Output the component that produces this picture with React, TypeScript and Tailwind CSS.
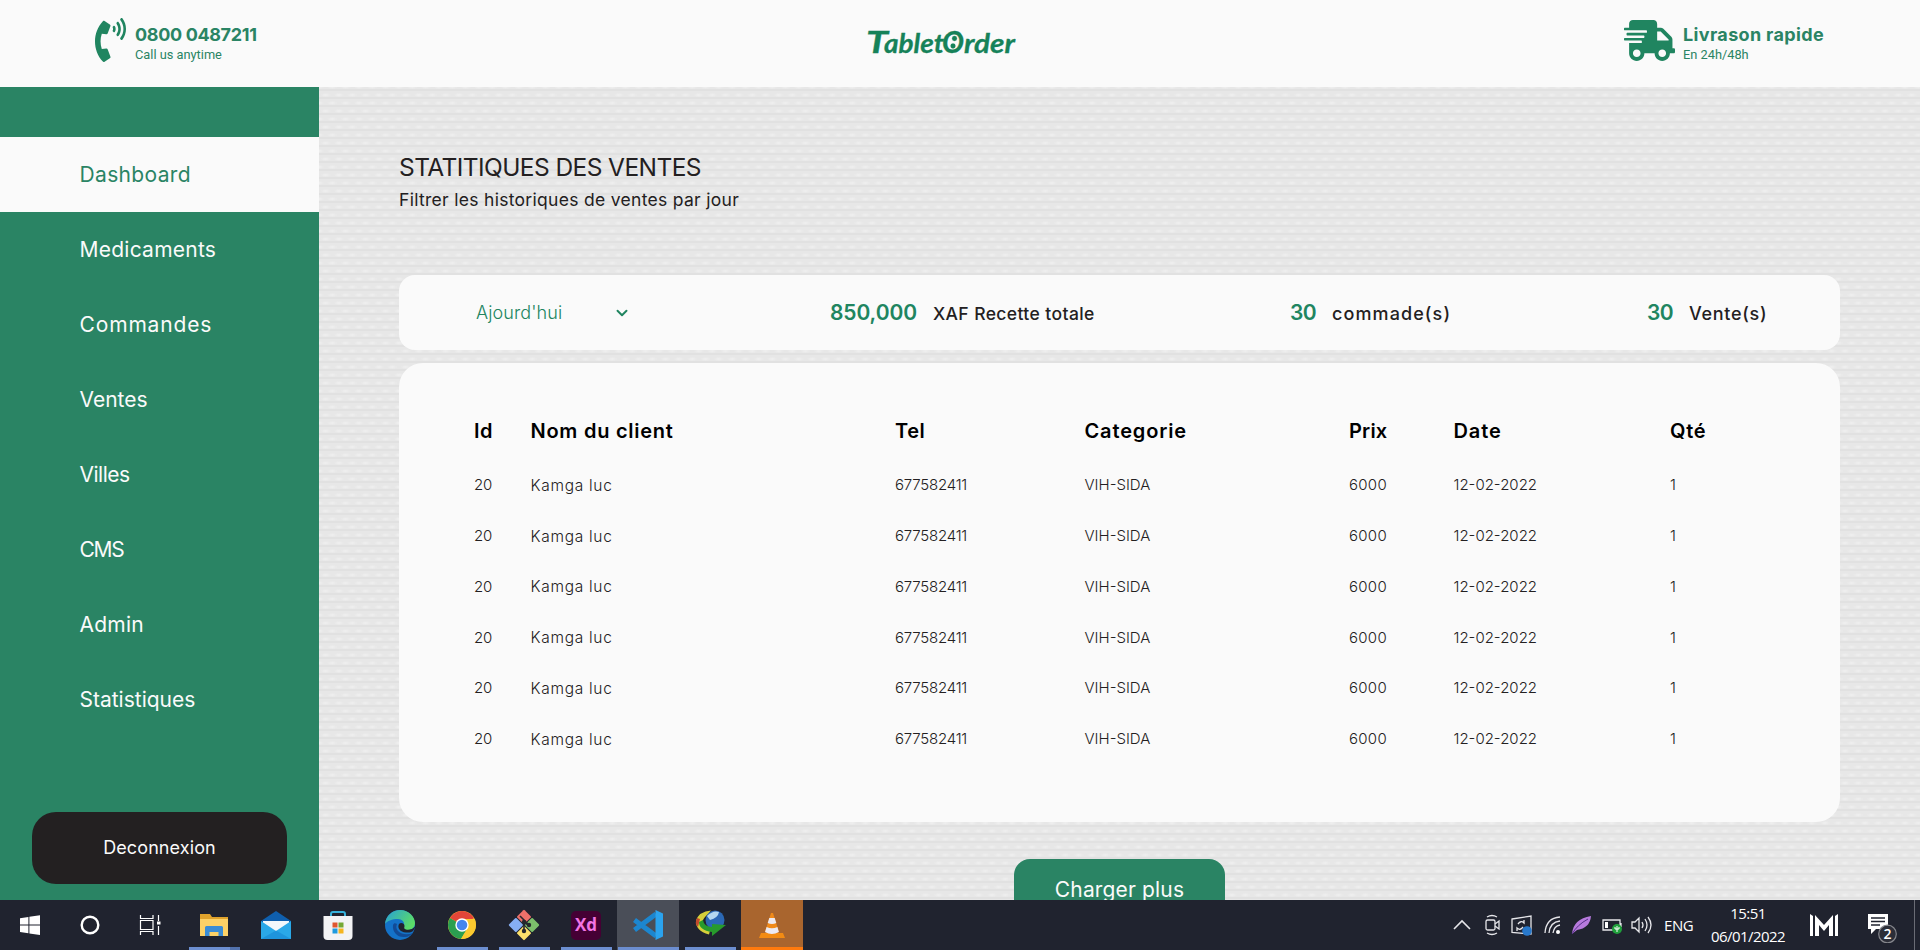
import type { ReactNode } from "react";
import { FaPhoneVolume, FaShippingFast } from "react-icons/fa";
import { ChevronDown } from "lucide-react";

const nav = [
  { label: "Dashboard", cls: "bg-[#fafafa] text-[#2a8464] tracking-[0.35px]" },
  { label: "Medicaments", cls: "text-[#fafafa] tracking-[0.25px]" },
  { label: "Commandes", cls: "text-[#fafafa] tracking-[0.85px]" },
  { label: "Ventes", cls: "text-[#fafafa] tracking-[0px]" },
  { label: "Villes", cls: "text-[#fafafa] tracking-[-0.5px]" },
  { label: "CMS", cls: "text-[#fafafa] tracking-[-1.3px]" },
  { label: "Admin", cls: "text-[#fafafa] tracking-[0.25px]" },
  { label: "Statistiques", cls: "text-[#fafafa] tracking-[0px]" },
];

const columns = [
  { label: "Id", cls: "tracking-[0.5px]" },
  { label: "Nom du client", cls: "tracking-[0.75px]" },
  { label: "Tel", cls: "tracking-[0.5px]" },
  { label: "Categorie", cls: "tracking-[0.85px]" },
  { label: "Prix", cls: "tracking-[0.2px]" },
  { label: "Date", cls: "tracking-[0.9px]" },
  { label: "Qté", cls: "tracking-[0.7px]" },
];

const sale = [
  { value: "20", cls: "tracking-[-0.2px]" },
  { value: "Kamga luc", cls: "text-[15.5px] tracking-[0.7px]" },
  { value: "677582411", cls: "tracking-[-0.22px]" },
  { value: "VIH-SIDA", cls: "" },
  { value: "6000", cls: "tracking-[0.29px]" },
  { value: "12-02-2022", cls: "" },
  { value: "1", cls: "" },
];

const tableGrid = "grid grid-cols-[56.5px_364.5px_189.5px_264.5px_104.5px_216.5px_1fr]";

function Logo() {
  return (
    <svg width="150" height="44" viewBox="0 0 150 44" fill="#168259" stroke="#168259" strokeWidth=".3" aria-label="TabletOrder">
      <g fontFamily="Lato, sans-serif" fontStyle="italic" fontWeight="700" fontSize="27">
        <text x="0" y="33" fontSize="31" textLength="22" lengthAdjust="spacingAndGlyphs">T</text>
        <text x="18" y="33" textLength="60" lengthAdjust="spacingAndGlyphs">ablet</text>
        <text x="76" y="33" fontSize="31" textLength="22" lengthAdjust="spacingAndGlyphs">O</text>
        <text x="98" y="33" textLength="51" lengthAdjust="spacingAndGlyphs">rder</text>
      </g>
      <circle cx="88.5" cy="18.5" r="2.4" />
      <circle cx="87" cy="26" r="2.4" />
    </svg>
  );
}

function Header() {
  return (
    <header className="flex h-[87px] shrink-0 items-start bg-[#fafafa] text-[#2a8464]">
      <div className="flex w-[866px] pt-[18px] pl-[95px]">
        <FaPhoneVolume className="h-11 w-[31px] text-[#208560]" preserveAspectRatio="none" />
        <div className="pt-[6px] pl-[9px]">
          <div className="text-[18px] leading-[21px] font-bold tracking-[-0.35px] whitespace-nowrap">0800 0487211</div>
          <div className="pt-px font-['Roboto',sans-serif] text-[12.8px] leading-[18px]">Call us anytime</div>
        </div>
      </div>
      <div className="pt-[20px]">
        <Logo />
      </div>
      <div className="ml-auto flex w-[296px] pt-[20px]">
        <FaShippingFast className="h-[41px] w-[51px] text-[#208560]" />
        <div className="pt-[4px] pl-[8px]">
          <div className="text-[18px] leading-[21px] font-bold tracking-[0.35px] whitespace-nowrap">Livrason rapide</div>
          <div className="pt-px font-['Roboto',sans-serif] text-[12.8px] leading-[18px]">En 24h/48h</div>
        </div>
      </div>
    </header>
  );
}

function Sidebar() {
  return (
    <aside className="flex w-[319px] shrink-0 flex-col bg-[#2a8464] pt-[50px]">
      <nav>
        {nav.map((item) => (
          <a key={item.label} className={`flex h-[75px] items-center pl-[79.5px] text-[21px] ${item.cls}`}>
            {item.label}
          </a>
        ))}
      </nav>
      <button className="mt-auto mb-4 ml-8 h-[72px] w-[255px] rounded-3xl bg-[#232021] pb-px text-[18px] tracking-[0.1px] text-[#fafafa]">
        Deconnexion
      </button>
    </aside>
  );
}

function Stat({ value, label, className, valueClass, labelClass }: {
  value: string; label: string; className: string; valueClass: string; labelClass: string;
}) {
  return (
    <div className={`flex items-baseline gap-4 whitespace-nowrap ${className}`}>
      <span className={`text-[21px] font-semibold text-[#208560] ${valueClass}`}>{value}</span>
      <span className={`font-medium text-[#232021] ${labelClass}`}>{label}</span>
    </div>
  );
}

function Main() {
  return (
    <main className="flex flex-1 flex-col overflow-hidden bg-[#e5e5e5] bg-[radial-gradient(ellipse_5px_2px_at_center,#f0f0f0_0,#f0f0f000_100%),radial-gradient(ellipse_5px_2px_at_center,#f0f0f0_0,#f0f0f000_100%),linear-gradient(#e7e7e7_0_6px,#e1e1e1_6px_8px)] bg-[size:13.33px_16px,13.33px_16px,13.33px_8px] bg-[position:0_0,6.66px_8px,0_4px] pr-20 pl-20">
      <h1 className="mt-[65px] text-[24.5px] leading-[30px] tracking-[-0.58px] text-[#232021]">STATITIQUES DES VENTES</h1>
      <p className="mt-[6px] text-[17.5px] leading-6 tracking-[0.3px] text-[#232021]">
        Filtrer les historiques de ventes par jour
      </p>
      <section className="mt-[63px] flex h-[75px] shrink-0 items-center rounded-2xl bg-[#fafafa]">
        <div className="ml-[77px] flex w-[354px] items-center text-[#208560]">
          <span className="w-[137px] text-[18px] font-light tracking-[0.1px]">Ajourd'hui</span>
          <ChevronDown className="size-[18px]" strokeWidth={2.6} />
        </div>
        <Stat value="850,000" label="XAF Recette totale" className="w-[460px]" valueClass="tracking-[-0.1px]" labelClass="text-[17.5px] tracking-[0.4px]" />
        <Stat value="30" label="commade(s)" className="w-[357px]" valueClass="tracking-[-0.6px]" labelClass="text-[18px] tracking-[1.1px]" />
        <Stat value="30" label="Vente(s)" className="" valueClass="tracking-[-0.6px]" labelClass="text-[18px] tracking-[0.7px]" />
      </section>
      <section className="mt-[13px] h-[459px] shrink-0 rounded-3xl bg-[#fafafa] pt-[52px] pl-[75px]">
        <div className={`${tableGrid} h-[45px] text-[20px] leading-[32px] font-semibold text-black`}>
          {columns.map((c) => (
            <span key={c.label} className={c.cls}>{c.label}</span>
          ))}
        </div>
        {Array.from({ length: 6 }, (_, i) => (
          <div key={i} className={`${tableGrid} h-[50.8px] items-center text-[15px] font-light text-[#232021]`}>
            {sale.map((c) => (
              <span key={c.value} className={c.cls}>{c.value}</span>
            ))}
          </div>
        ))}
      </section>
      <button className="mt-[37px] h-[61px] w-[211px] shrink-0 self-center rounded-2xl bg-[#2a8464] text-[21px] tracking-[0.15px] text-[#fafafa]">
        Charger plus
      </button>
    </main>
  );
}

function Task({ children, className = "", bar = "" }: { children: ReactNode; className?: string; bar?: string }) {
  return (
    <div className={`flex h-full w-[62px] flex-col items-center ${className}`}>
      <svg width="34" height="34" viewBox="0 0 34 34" className="mt-2 mb-[5px] shrink-0">{children}</svg>
      <div className={`h-[3px] ${bar}`} />
    </div>
  );
}

function Taskbar() {
  return (
    <footer className="flex h-[50px] shrink-0 justify-between bg-[#20232f] font-['Open_Sans',sans-serif] text-white">
      <div className="flex">
        <Task className="w-[60px]!">
          <path fill="#fff" d="M7 10.2l8.4-1.2v7.6H7zM16.4 8.8L27 7.3v9.3H16.4zM7 17.6h8.4v7.6L7 24zM16.4 17.6H27v9.5l-10.6-1.5z" />
        </Task>
        <Task className="w-[60px]!">
          <circle cx="17" cy="17" r="8.3" fill="none" stroke="#fff" strokeWidth="2.4" />
        </Task>
        <Task className="mr-[3.5px] w-[60px]!">
          <g stroke="#fff" strokeWidth="1.2" fill="none">
            <path d="M7.500 7v3.500h12.500V7M7.500 27v-3.500h12.500V27M7.500 12.500h12.500v9H7.500zM25.500 7v6M25.500 18v9" />
          </g>
          <rect x="24" y="13.500" width="3.500" height="3" fill="#fff" />
        </Task>
        <Task className="w-[61.5px]!" bar="w-[51px] bg-[linear-gradient(90deg,#6c8ed0_0_41px,#5272ad_41px)]">
          <path fill="#dfa22c" d="M3 6h10l2 3h16v19H3z" />
          <path fill="#fdd166" d="M3 11h28v17H3z" />
          <path fill="#3b8cd4" d="M8 28V19.500q0-1.500 1.500-1.500h15q1.500 0 1.500 1.500V28h-4.500v-4h-9v4z" />
        </Task>
        <Task>
          <path fill="#0f5fae" d="M2 13L17 3l15 10v4H2z" />
          <path fill="#f2f7fb" d="M4 13h26v10H4z" />
          <path fill="#2aa8e8" d="M2 13l15 10 15-10v18H2z" />
          <path fill="#1787d3" d="M2 31l15-8.500L32 31z" opacity=".6" />
        </Task>
        <Task>
          <path d="M10 9V6q0-2 2-2h10q2 0 2 2v3" fill="none" stroke="#36b2dc" strokeWidth="2" />
          <path fill="#f3f3f5" d="M2.500 8h29v20q0 4-4 4h-21q-4 0-4-4z" />
          <path fill="#e0572f" d="M11.500 14.500h5v5h-5z" />
          <path fill="#74a835" d="M17.500 14.500h5v5h-5z" />
          <path fill="#1f9ade" d="M11.500 20.500h5v5h-5z" />
          <path fill="#f5b520" d="M17.500 20.500h5v5h-5z" />
        </Task>
        <Task>
          <defs>
            <linearGradient id="edge" x1="0" y1="0" x2="1" y2=".5">
              <stop offset="0" stopColor="#279fd8" /><stop offset="1" stopColor="#5bdc68" />
            </linearGradient>
          </defs>
          <circle cx="17" cy="17" r="15" fill="#1472c8" />
          <path fill="url(#edge)" d="M2 16C3 7 10 2 17 2c9 0 15 7 15 13 0 5-4 7-7 7-4 0-6-2-4-4 1-4-2-7-6-7-6 0-11 2-13 5z" />
          <path fill="#124b96" d="M10 17c-1 7 5 13 12 12 3 0 6-2 8-4-5 2-11 2-15-2-2-2-2-5-1-7-2-1-3-1-4 1z" />
          <path fill="#20232f" d="M16 16c-2 4 1 8 7 8.500 3 .300 5 0 7-1.500l3-5-4 3c-4 1.500-9 1-7.500-2.500.500-3-3.500-4.500-5.500-2.500z" />
        </Task>
        <Task bar="w-[51px] bg-[#6c8ed0]">
          <circle cx="17" cy="17" r="14" fill="#fbc92f" />
          <path fill="#e24538" d="M17 17L4.900 10A14 14 0 0 1 29.100 10z" />
          <path fill="#2b9f50" d="M17 17L4.900 10A14 14 0 0 0 16 31l6-10z" />
          <path fill="#fbc92f" d="M22 21l-6 10A14 14 0 0 0 29.500 11H17z" />
          <circle cx="17" cy="17" r="6.700" fill="#fff" />
          <circle cx="17" cy="17" r="5.300" fill="#4585ee" />
        </Task>
        <Task bar="w-[51px] bg-[#6c8ed0]">
          <g transform="rotate(45 17 17)">
            <rect x="6" y="6" width="10.500" height="10.500" rx="1" fill="#ec706a" />
            <rect x="17.500" y="6" width="10.500" height="10.500" rx="1" fill="#7cbf6b" />
            <rect x="6" y="17.500" width="10.500" height="10.500" rx="1" fill="#86aef3" />
            <rect x="17.500" y="17.500" width="10.500" height="10.500" rx="1" fill="#fce06b" />
          </g>
          <path d="M13 8l8 8M17 12v13M17 14l5 4" stroke="#24272e" strokeWidth="1.600" />
          <circle cx="17" cy="23" r="2.200" fill="#24272e" />
          <circle cx="22" cy="17" r="2.200" fill="#24272e" />
          <circle cx="17" cy="14" r="2.200" fill="#24272e" />
        </Task>
        <Task bar="w-[51px] bg-[#6c8ed0]">
          <rect x="2" y="3" width="30" height="29" rx="5" fill="#450034" />
          <text x="17" y="23" textAnchor="middle" fontSize="17" fontWeight="700" fill="#f274e4" fontFamily="Open Sans, sans-serif">Xd</text>
        </Task>
        <Task className="bg-[#4a4e58]" bar="w-[61px] bg-[#6c8ed0]">
          <path fill="none" stroke="#1c86cf" strokeWidth="5" strokeLinejoin="round" d="M3.500 12L25 28M3.500 22L25 6" />
          <path fill="#2ba3ee" d="M24.500 2l7.500 3.500v23L24.500 32z" />
        </Task>
        <Task bar="w-[51px] bg-[#6c8ed0]">
          <circle cx="22" cy="12" r="9.500" fill="#2b68b5" />
          <path fill="#b4d8f0" d="M14 8q6-6 12-4-1 6-9 8z" />
          <path fill="#d6cf3a" d="M18 2.500q-12 1-15 10-1 10 13 14l1-4Q5 17 12 9z" />
          <path fill="#c24a2c" d="M4 10q-3 5 1 9l2-8z" />
          <path fill="#279a2c" d="M10 12q1 7 9 7v-3l14 1-14 11v-4Q6 22 6 14z" />
        </Task>
        <Task className="bg-[#a9652e]" bar="w-[62px] bg-[#ff7a0d]">
          <path fill="#f28b13" d="M6 25h22l2 5H4z" />
          <path fill="#f08a1a" d="M16 5h2l6 19q-7 4-14 0z" />
          <path fill="#eceaf2" d="M14.300 10h5.400l1.600 5q-4.300 2-8.600 0zM11.600 19q5.400 2.500 10.800 0l1.500 5q-7 4-13.900 0z" />
        </Task>
      </div>

      <div className="flex items-center">
        <svg width="210" height="30" viewBox="0 0 210 30" fill="none" stroke="#e6e6ea" strokeWidth="1.300">
          <path d="M3 19l8-8 8 8" strokeWidth="1.600" />
          <rect x="35" y="10" width="9" height="10" rx="1.500" />
          <path d="M44 14l4-3v8l-4-3M36 7q5-3 10 0M36 23q5 3 10 0" />
          <path d="M61 9l19-3v18l-19-1.500zM67 14q3-4 6-1v-3M72 17q-3 4-6 1v3" />
          <circle cx="76" cy="21" r="4.800" fill="#2878cb" stroke="none" />
          <path d="M94 23q1-15 15-16M98 23q1-11 11-12M102 23q1-7 7-8" />
          <circle cx="107" cy="22" r="2" fill="#fff" stroke="none" />
          <path d="M121 24Q122 9 140 6q-1 12-14 14z" fill="#b77add" stroke="none" />
          <path d="M121 24q5-9 16-15" stroke="#553089" strokeWidth="1" />
          <path d="M152 10h17v10h-17zM170 13v4" />
          <rect x="154" y="12" width="3" height="6" fill="#fff" stroke="none" />
          <circle cx="166" cy="19" r="5" fill="#1fa03b" stroke="none" />
          <path d="M166 16v6M164 17v2h4v-2" stroke="#fff" strokeWidth="1" />
          <path d="M181 12h3l4-4v14l-4-4h-3zM191 12q2 3 0 6M194 9q4 6 0 12M197 7q6 8 0 16" />
        </svg>
        <span className="ml-[3px] w-[46px] text-[15px] tracking-[-0.400px]">ENG</span>
        <div className="flex w-[76px] flex-col items-center text-[15px] leading-[23px] tracking-[-0.550px] whitespace-nowrap">
          <span>15:51</span>
          <span>06/01/2022</span>
        </div>
        <svg width="28" height="24" viewBox="0 0 28 24" className="ml-[24px]" fill="#fff">
          <path d="M0 1l3 2v20H0zM28 1l-3 2v20h3zM5 2l9 10 9-10v21h-4V12l-5 6-5-6v11H5z" />
        </svg>
        <svg width="36" height="36" viewBox="0 0 36 36" className="ml-[28px]">
          <path fill="#fff" d="M2 7h20v15H10l-5 5v-5H2z" />
          <path d="M5 11h14M5 14.500h14M5 18h9" stroke="#20232f" strokeWidth="1.400" />
          <circle cx="21.500" cy="27" r="8.800" fill="#2c2e38" stroke="#85868c" strokeWidth="1.200" />
          <text x="21.500" y="32" textAnchor="middle" fontSize="14" fontWeight="600" fill="#fff" fontFamily="Open Sans, sans-serif">2</text>
        </svg>
        <div className="mr-[5px] ml-[12px] h-full w-px bg-[#6a6c75]" />
      </div>
    </footer>
  );
}

export default function App() {
  return (
    <div className="flex h-[950px] w-[1920px] flex-col overflow-hidden font-['Inter',sans-serif]">
      <Header />
      <div className="flex min-h-0 flex-1">
        <Sidebar />
        <Main />
      </div>
      <Taskbar />
    </div>
  );
}
